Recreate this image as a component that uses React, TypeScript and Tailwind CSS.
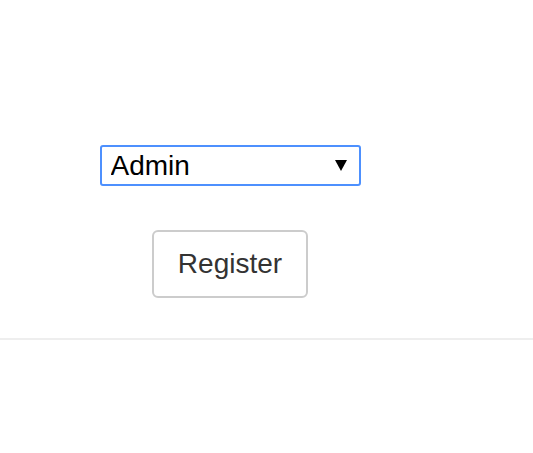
import { useState } from "react";

export default function App() {
  const [role, setRole] = useState("Admin");

  return (
    <div className="w-[533px] h-[453px] bg-white font-['Liberation_Sans',Arial,sans-serif]">
      <div className="w-[460px] flex flex-col items-center pt-[145px]">
        {/* Role select */}
        <div className="relative w-[261px] h-[41px]">
          <select
            value={role}
            onChange={(e) => setRole(e.target.value)}
            className="appearance-none w-full h-full border-2 border-[#4d90fe] rounded-[3px] bg-white pl-[9px] text-[28px] leading-none text-black outline-none"
          >
            <option>Admin</option>
            <option>User</option>
          </select>
          <svg
            className="absolute right-[14px] top-[15px] pointer-events-none"
            width="12"
            height="11"
            viewBox="0 0 12 11"
          >
            <path d="M0 0 H12 L6 11 Z" fill="#000" />
          </svg>
        </div>

        <button className="mt-[44px] w-[156px] h-[68px] border-2 border-[#ccc] rounded-[6px] bg-white text-[28px] text-[#333]">
          Register
        </button>
      </div>

      <div className="mt-[40px] border-t-2 border-[#eee]" />
    </div>
  );
}
